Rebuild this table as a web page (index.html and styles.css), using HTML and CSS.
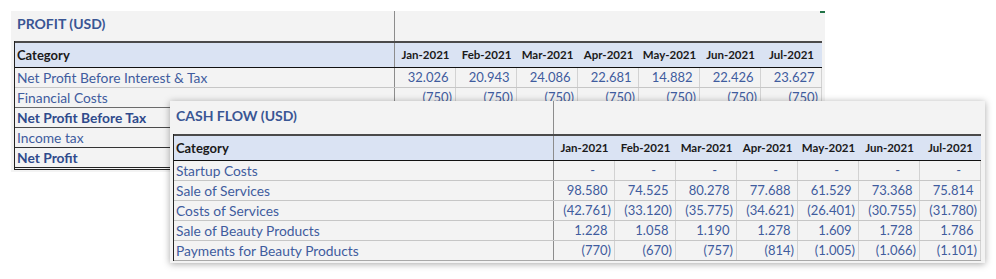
FILE: index.html
```html
<!DOCTYPE html>
<html>
<head>
<meta charset="utf-8">
<link rel="stylesheet" href="styles.css">
</head>
<body>
<div class="stage">
  <section class="panel profit">
    <span class="mark"></span>
    <div class="title-row">
      <div class="title">PROFIT (USD)</div>
      <div></div>
    </div>
    <div class="table">
      <div class="row head">
        <div class="cat">Category</div>
        <div>Jan-2021</div><div>Feb-2021</div><div>Mar-2021</div><div>Apr-2021</div><div>May-2021</div><div>Jun-2021</div><div>Jul-2021</div>
      </div>
      <div class="row">
        <div class="cat">Net Profit Before Interest &amp; Tax</div>
        <div class="p">32.026</div><div class="p">20.943</div><div class="p">24.086</div><div class="p">22.681</div><div class="p">14.882</div><div class="p">22.426</div><div class="p">23.627</div>
      </div>
      <div class="row pre-total">
        <div class="cat">Financial Costs</div>
        <div>(750)</div><div>(750)</div><div>(750)</div><div>(750)</div><div>(750)</div><div>(750)</div><div>(750)</div>
      </div>
      <div class="row total">
        <div class="cat">Net Profit Before Tax</div>
        <div></div><div></div><div></div><div></div><div></div><div></div><div></div>
      </div>
      <div class="row pre-final">
        <div class="cat">Income tax</div>
        <div></div><div></div><div></div><div></div><div></div><div></div><div></div>
      </div>
      <div class="row total final">
        <div class="cat">Net Profit</div>
        <div></div><div></div><div></div><div></div><div></div><div></div><div></div>
      </div>
    </div>
  </section>

  <section class="panel cash">
    <div class="title-row tall">
      <div class="title">CASH FLOW (USD)</div>
      <div></div>
    </div>
    <div class="table">
      <div class="row head">
        <div class="cat">Category</div>
        <div>Jan-2021</div><div>Feb-2021</div><div>Mar-2021</div><div>Apr-2021</div><div>May-2021</div><div>Jun-2021</div><div>Jul-2021</div>
      </div>
      <div class="row">
        <div class="cat">Startup Costs</div>
        <div class="d">-</div><div class="d">-</div><div class="d">-</div><div class="d">-</div><div class="d">-</div><div class="d">-</div><div class="d">-</div>
      </div>
      <div class="row">
        <div class="cat">Sale of Services</div>
        <div class="p">98.580</div><div class="p">74.525</div><div class="p">80.278</div><div class="p">77.688</div><div class="p">61.529</div><div class="p">73.368</div><div class="p">75.814</div>
      </div>
      <div class="row">
        <div class="cat">Costs of Services</div>
        <div>(42.761)</div><div>(33.120)</div><div>(35.775)</div><div>(34.621)</div><div>(26.401)</div><div>(30.755)</div><div>(31.780)</div>
      </div>
      <div class="row">
        <div class="cat">Sale of Beauty Products</div>
        <div class="p">1.228</div><div class="p">1.058</div><div class="p">1.190</div><div class="p">1.278</div><div class="p">1.609</div><div class="p">1.728</div><div class="p">1.786</div>
      </div>
      <div class="row last">
        <div class="cat">Payments for Beauty Products</div>
        <div>(770)</div><div>(670)</div><div>(757)</div><div>(814)</div><div>(1.005)</div><div>(1.066)</div><div>(1.101)</div>
      </div>
    </div>
  </section>
</div>
</body>
</html>
```

FILE: styles.css
```css
html, body {
  margin: 0;
  padding: 0;
  background: #ffffff;
}

.stage {
  position: relative;
  box-sizing: border-box;
  height: 279px;
  padding: 11px 0 0 11px;
  font-family: Lato, "Open Sans", sans-serif;
  font-size: 13px;
  color: #3f5c9e;
}

.panel {
  background: #f3f3f3;
  box-sizing: border-box;
}

.profit {
  position: relative;
  width: 814px;
  padding: 0 3px 2px 3px;
}

.cash {
  position: absolute;
  left: 170px;
  top: 101px;
  width: 815px;
  padding: 0 4px 2px 3px;
  box-shadow: 0 1px 7px rgba(0, 0, 0, 0.35);
}

.mark {
  position: absolute;
  top: 0;
  right: 0;
  width: 5px;
  height: 2px;
  background: #217346;
}

.title-row {
  display: grid;
  grid-template-columns: 381px 1fr;
  height: 30px;
}

.title-row.tall {
  height: 33px;
}

.title-row > div:first-child {
  border-right: 1px solid #8c8c8c;
}

.title {
  font-weight: 700;
  font-size: 14px;
  color: #3a5694;
  padding: 5px 0 0 3px;
  line-height: 16px;
}

.cash .title {
  padding-top: 7px;
}

.table {
  border-left: 1px solid #222;
}

.row {
  display: grid;
  grid-template-columns: 380px repeat(7, 61px);
  height: 20px;
  box-sizing: border-box;
  border-bottom: 1px solid #c6c6c6;
}

.row > div {
  box-sizing: border-box;
  border-right: 1px solid #d2d2d2;
  text-align: right;
  padding-right: 3px;
  line-height: 19px;
  white-space: nowrap;
  overflow: hidden;
}

.row > div.cat {
  text-align: left;
  padding: 0 0 0 2px;
  font-size: 13.8px;
  border-right: 1px solid #8c8c8c;
}

.row > div.p::after {
  content: ")";
  visibility: hidden;
}

.row > div.d {
  padding-right: 19px;
}

.row.head {
  height: 27px;
  background: #dae3f3;
  border-top: 2px solid #4a4a4a;
  border-bottom: 1px solid #111;
  color: #1a1a1a;
  font-weight: 700;
}

.row.head > div {
  border-right: none;
  text-align: center;
  padding: 0;
  font-size: 11.5px;
  line-height: 24px;
}

.row.head > div.cat {
  font-size: 13px;
  border-right: 1px solid #8c8c8c;
  padding-left: 2px;
  text-align: left;
}

.row.pre-total {
  border-bottom-color: #6a6a6a;
}

.row.total {
  font-weight: 700;
  color: #2f4a8c;
  border-bottom-color: #4a4a4a;
}

.row.pre-final {
  border-bottom-color: #333;
}

.row.final {
  height: 22px;
  border-bottom: 3px double #222;
}

.row.last {
  border-bottom-color: #a8a8a8;
}
```
